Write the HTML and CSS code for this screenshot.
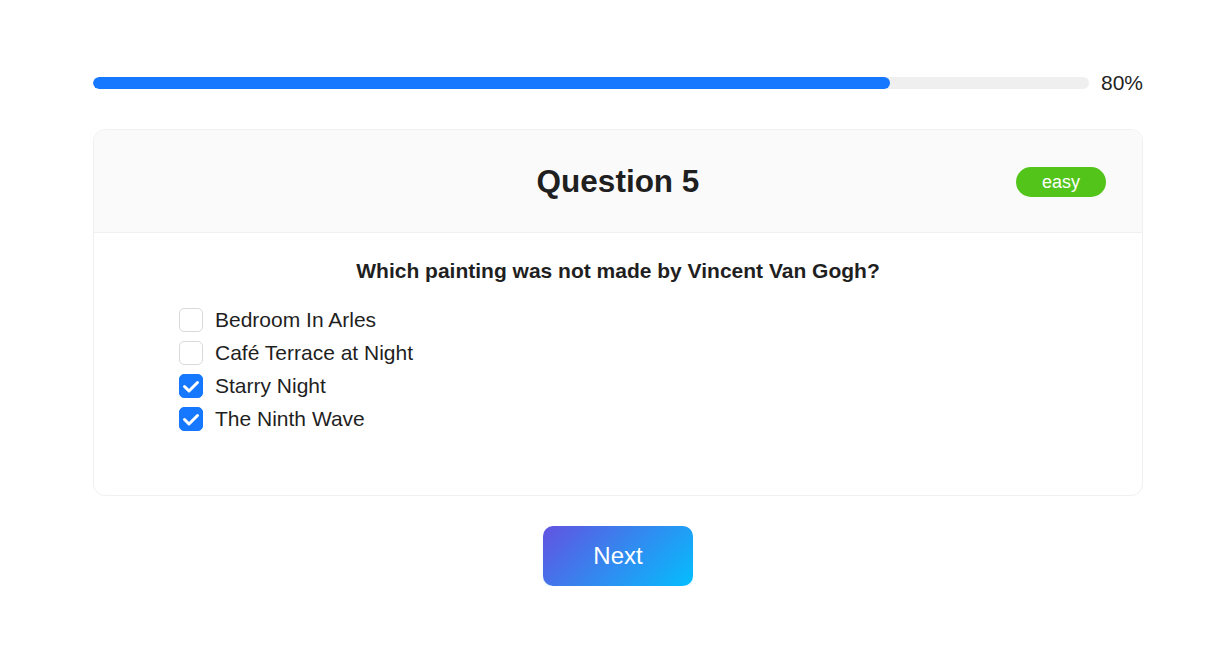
FILE: index.html
```html
<!DOCTYPE html>
<html>
<head>
<meta charset="utf-8">
<link rel="stylesheet" href="styles.css">
</head>
<body>
<div class="page">
  <div class="progress">
    <div class="track"><div class="fill" style="width:80%"></div></div>
    <span class="pct">80%</span>
  </div>
  <div class="card">
    <div class="card-head">
      <h1 class="title">Question 5</h1>
      <span class="badge">easy</span>
    </div>
    <div class="card-body">
      <p class="question">Which painting was not made by Vincent Van Gogh?</p>
      <ul class="options">
        <li class="option"><span class="box"></span><span>Bedroom In Arles</span></li>
        <li class="option"><span class="box"></span><span>Café Terrace at Night</span></li>
        <li class="option"><span class="box checked"><svg viewBox="0 0 24 24" width="24" height="24"><path d="M5.5 12.5 L10 17 L18.5 8.5" fill="none" stroke="#fff" stroke-width="3" stroke-linecap="round" stroke-linejoin="round"/></svg></span><span>Starry Night</span></li>
        <li class="option"><span class="box checked"><svg viewBox="0 0 24 24" width="24" height="24"><path d="M5.5 12.5 L10 17 L18.5 8.5" fill="none" stroke="#fff" stroke-width="3" stroke-linecap="round" stroke-linejoin="round"/></svg></span><span>The Ninth Wave</span></li>
      </ul>
    </div>
  </div>
  <div class="actions">
    <button class="next">Next</button>
  </div>
</div>
</body>
</html>
```

FILE: styles.css
```css
* { box-sizing: border-box; }
html, body { margin: 0; padding: 0; background: #fff; }
body { font-family: "Liberation Sans", Arial, sans-serif; color: #1f1f1f; }
.page { width: 1050px; margin-left: 93px; padding-top: 71px; }
.progress { display: flex; align-items: center; gap: 12px; height: 24px; }
.track { flex: 1; height: 12px; background: #efefef; border-radius: 6px; overflow: hidden; }
.fill { height: 100%; background: #1677ff; border-radius: 6px; }
.pct { font-size: 21px; color: #1f1f1f; line-height: 24px; }
.card { margin-top: 34px; border: 1px solid #f0f0f0; border-radius: 12px; height: 367px; overflow: hidden; }
.card-head { position: relative; height: 103px; background: #fafafa; border-bottom: 1px solid #f0f0f0; display: flex; align-items: center; justify-content: center; }
.title { margin: 0; font-size: 31.5px; font-weight: bold; color: #1f1f1f; }
.badge { position: absolute; right: 36px; top: 37px; width: 90px; height: 30px; border-radius: 15px; background: #52c41a; color: #fff; font-size: 18px; line-height: 30px; text-align: center; }
.card-body { padding: 25px 85px 0; }
.question { margin: 0; text-align: center; font-size: 21px; font-weight: bold; line-height: 26px; color: #1f1f1f; }
.options { list-style: none; margin: 0; padding: 0; margin-top: 24px; display: flex; flex-direction: column; gap: 9px; }
.option { display: flex; align-items: center; gap: 12px; font-size: 21px; line-height: 24px; height: 24px; color: #1f1f1f; }
.box { width: 24px; height: 24px; border: 1px solid #d9d9d9; border-radius: 5px; background: #fff; display: inline-flex; }
.box.checked { background: #1677ff; border-color: #1677ff; }
.box svg { display: block; margin: -1px; }
.actions { display: flex; justify-content: center; margin-top: 30px; }
.next { width: 150px; height: 60px; border: none; border-radius: 10px; background: linear-gradient(135deg, #6253e1, #04befe); color: #fff; font-family: "Liberation Sans", Arial, sans-serif; font-size: 24px; box-shadow: 0 2px 2px rgba(4, 190, 254, 0.12); }
```
